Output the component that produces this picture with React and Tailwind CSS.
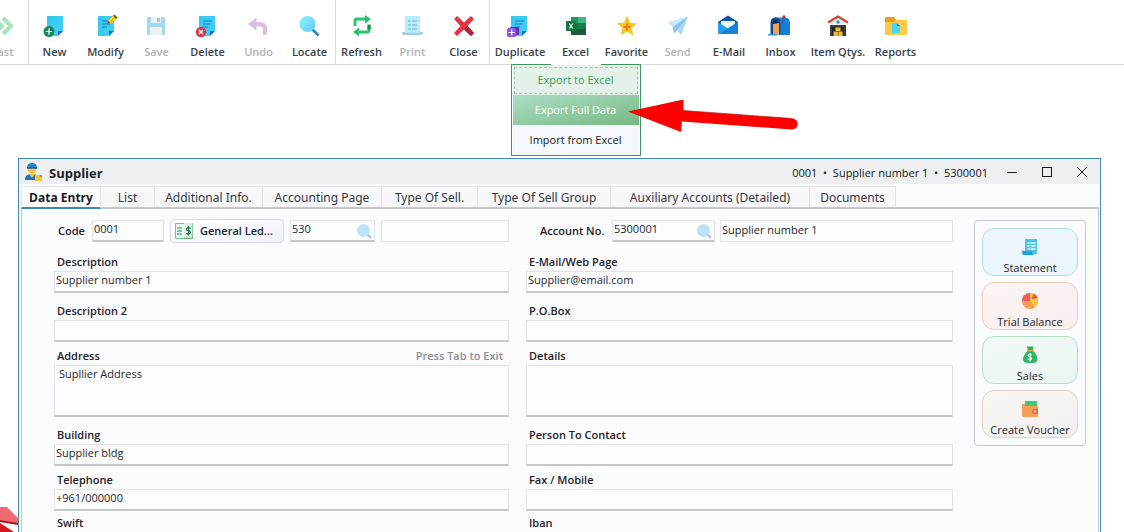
import React from "react";

function Icon({ children }) {
  return (
    <svg viewBox="0 0 24 24" className="size-6 shrink-0 overflow-visible" aria-hidden="true">
      {children}
    </svg>
  );
}

function Sheet({ x = 4, lines = true }) {
  return (
    <g>
      <path d={`M${x} 2h16v15l-5 5h-11z`} fill="url(#sheetFill)" />
      <path d={`M${x + 16} 17l-5 5v-5z`} fill="#1574cc" />
      {lines && (
        <path d={`M${x + 4} 7h9M${x + 4} 10h8M${x + 4} 13h5`} stroke="#1a80c6" strokeWidth="1" fill="none" />
      )}
    </g>
  );
}

const icons = {
  last: (
    <Icon>
      <path d="M3 4l8 8-8 8M12 4l8 8-8 8" fill="none" stroke="#a3e6bd" strokeWidth="4" />
    </Icon>
  ),
  fresh: (
    <Icon>
      <Sheet lines={false} />
      <circle cx="6" cy="17.5" r="5.5" fill="#128a57" />
      <path d="M6 14.3v6.4M2.8 17.5h6.4" stroke="#fff" strokeWidth="1.2" />
    </Icon>
  ),
  modify: (
    <Icon>
      <Sheet />
      <path d="M13 10l2-5 5-4 3 3-5 5z" fill="#f5be0b" />
      <path d="M19 1.700l1.500-1.200 3 3-1.300 1.500z" fill="#7c5a12" />
      <path d="M13 10l1-3 2 2z" fill="#5f4918" />
      <path d="M15.500 6.500l4-4" stroke="#fff0a0" strokeWidth="1" />
    </Icon>
  ),
  save: (
    <Icon>
      <path d="M2 4q0-1 1-1h16l1 1v16q0 1-1 1H3q-1 0-1-1z" fill="#a3d9ef" />
      <path d="M6 3h10v6H6zM5 13h12v8H5z" fill="#eef1f4" />
      <path d="M12 4h3v4h-3z" fill="#9cc8df" />
    </Icon>
  ),
  remove: (
    <Icon>
      <Sheet x={3} />
      <circle cx="5" cy="18" r="5.200" fill="#d63a4d" />
      <path d="M3 16l4 4M7 16l-4 4" stroke="#fff" strokeWidth="1.3" />
    </Icon>
  ),
  undo: (
    <Icon>
      <path d="M1 10l8.500-6.500V8H13q7 0 7 7v6h-4v-5q0-3.500-3.500-3.500h-3V17z" fill="#dac0e8" />
    </Icon>
  ),
  locate: (
    <Icon>
      <path d="M14 15l6.500 6.500" stroke="#2484cf" strokeWidth="2.600" />
      <circle cx="9.500" cy="10" r="8" fill="url(#lensFill)" />
    </Icon>
  ),
  refresh: (
    <Icon>
      <path d="M5 12V7q0-2 2-2h9M19 11v5q0 2-2 2H8" fill="none" stroke="#27c469" strokeWidth="3" />
      <path d="M15 1l6 4-6 4.500zM9 13.500v9L3 18z" fill="#27c469" />
      <path d="M17.500 10.500h3v5h-3z" fill="#149a4d" />
    </Icon>
  ),
  print: (
    <Icon>
      <path d="M4 2h15v18H4z" fill="#b5eefa" />
      <path d="M7 7h3M11 7h5M7 11h3M11 11h5M7 15h3M11 15h5" stroke="#7ba9d0" strokeWidth="1" />
      <path d="M1 18q0 3 2 3h17q2 0 2-3h-3v1H4v-1z" fill="#a9c9e8" />
    </Icon>
  ),
  close: (
    <Icon>
      <path d="M5 2l7 6.500L19 2l3 3-6.500 7 6.500 7-3 3-7-6.500L5 22l-3-3 6.500-7L2 5z" fill="#e23443" />
      <path d="M12 15.500L15.500 12l6.500 7-3 3z" fill="#b81f37" />
    </Icon>
  ),
  duplicate: (
    <Icon>
      <Sheet x={3} />
      <rect x="2" y="13" width="9" height="8" rx="1" fill="#5b2fae" />
      <rect x="-1" y="14" width="9.500" height="9" rx="2" fill="#9450e0" />
      <path d="M3.700 15.500v6M0.700 18.500h6" stroke="#fff" strokeWidth="1.200" />
    </Icon>
  ),
  excel: (
    <Icon>
      <path d="M7 3h15v18H7z" fill="#21734a" />
      <path d="M14 3h8v6h-8z" fill="#3ab881" />
      <path d="M7 3h7v6H7z" fill="#259461" />
      <path d="M14 9h8v6h-8z" fill="#1a7f4b" />
      <path d="M7 15h15v6H7z" fill="#1b5b38" />
      <rect x="2" y="7" width="10" height="10" rx="1" fill="#117a43" />
      <path d="M5.300 9.500l3.400 5M8.700 9.500l-3.400 5" stroke="#fff" strokeWidth="1.200" />
    </Icon>
  ),
  favorite: (
    <Icon>
      <path d="M12 1.800l2.900 7 7.300.4-5.600 4.900 1.800 7.400-6.400-3.900-6.400 3.900 1.800-7.400-5.600-4.900 7.300-.4z" fill="#fcc41d" />
      <path d="M12 9.500v7M8.500 13h7" stroke="#f0781a" strokeWidth="1.800" />
    </Icon>
  ),
  send: (
    <Icon>
      <path d="M2 8.500L22 2.500 15 21l-4-5-3 3.500-1-6.500z" fill="#a7d9f4" />
      <path d="M2 8.500L22 2.500 7 13z" fill="#c4e9fa" />
      <path d="M8 19.500L7 13l15-10.500L11 16z" fill="#86c4ea" />
    </Icon>
  ),
  email: (
    <Icon>
      <path d="M1 8l10-6.500L21 8v6H1z" fill="#11549f" />
      <path d="M4 7h14v8H4z" fill="#eef8ff" />
      <path d="M1 8l10 6.500L21 8v11q0 1-1 1H2q-1 0-1-1z" fill="#27a0e6" />
      <path d="M21 8v11q0 1-1 1H2z" fill="#1683d2" />
    </Icon>
  ),
  inbox: (
    <Icon>
      <path d="M6 3.500h10q5 0 5 6V21H7z" fill="#1280db" />
      <path d="M1.500 21V9q0-5.500 5-5.500t5 5.500v12z" fill="#164f91" />
      <path d="M3.500 20V9.500q0-4 3-4t3 4V20z" fill="#0b2f61" />
      <path d="M4 10l6-1v12H4z" fill="#eda15a" />
      <path d="M-1 20h9v1.500h-9z" fill="#2e9be2" />
      <path d="M13.500 10V1.500h3V4h-2v6z" fill="#c62a3f" />
    </Icon>
  ),
  items: (
    <Icon>
      <path d="M4 7l8-4.500L20 7v14.500H4z" fill="#eceef0" />
      <path d="M4 11h16v11H4z" fill="#3b3d43" />
      <path d="M2 8.500l10-6 10 6" fill="none" stroke="#d2452b" strokeWidth="2.200" />
      <circle cx="12" cy="8" r="1.800" fill="#2798e0" />
      <path d="M6 13h12v9H6z" fill="#25262a" />
      <path d="M9.500 13.500h5V17h-5zM7.500 17.500h4.300V22H7.500zM12.300 17.500h4.300V22h-4.300z" fill="#efbd2f" />
    </Icon>
  ),
  reports: (
    <Icon>
      <path d="M1 4q0-1 1-1h8l2 3h10q1 0 1 1v4H1z" fill="#e3a21a" />
      <path d="M1 8h9l2-2h10q1 0 1 1v13q0 1-1 1H2q-1 0-1-1z" fill="#fdcb48" />
      <path d="M8 9h5l3 3v7H8z" fill="#44d8f0" />
      <path d="M13 9l3 3h-3z" fill="#1785cf" />
    </Icon>
  ),
};

function Gradients() {
  return (
    <svg className="absolute size-0" aria-hidden="true">
      <defs>
        <linearGradient id="sheetFill" x1="0" y1="0" x2="1" y2="1">
          <stop offset="0" stopColor="#34c8f0" />
          <stop offset="1" stopColor="#43cff5" />
        </linearGradient>
        <linearGradient id="lensFill" x1="0" y1="0" x2="1" y2="1">
          <stop offset="0" stopColor="#8df3fd" />
          <stop offset="1" stopColor="#5fcaf5" />
        </linearGradient>
      </defs>
    </svg>
  );
}

function Tool({ icon, label, disabled, width = "w-[51px]" }) {
  return (
    <button
      type="button"
      disabled={disabled}
      className={`flex h-16 shrink-0 flex-col items-center gap-1.5 pt-3.5 text-[11px] leading-4 font-semibold whitespace-nowrap ${width} ${
        disabled ? "text-[#b0b3b8]" : "text-[#39424d]"
      }`}
    >
      {icons[icon]}
      <span>{label}</span>
    </button>
  );
}

function ExcelMenu() {
  return (
    <div className="absolute top-full left-1/2 z-20 w-[130px] -translate-x-1/2 border border-[#3f9360] bg-white text-[11px]">
      <div className="absolute -top-px left-1/2 h-px w-[50px] -translate-x-1/2 bg-white" />
      <div className="px-px">
        <button type="button" className="flex h-[30px] w-full items-center justify-center bg-[#e4f1e9] p-px text-[#369a58]">
          <span className="flex h-[27px] w-full items-center justify-center border border-dashed border-[#9fceaf]">Export to Excel</span>
        </button>
        <button type="button" className="block h-[30px] w-full bg-linear-to-br from-[#abdfc6] to-[#78b881] text-white">
          Export Full Data
        </button>
        <button type="button" className="block h-[30px] w-full bg-[#f5f8fd] text-[#17191c]">
          Import from Excel
        </button>
      </div>
      <svg viewBox="0 0 172 34" className="absolute top-[34px] left-[116px] h-[34px] w-[172px]" aria-hidden="true">
        <path d="M0 12.500L55.500 0.500v11L164.500 19.500a5.500 5.500 0 0 1-.5 11L54 22.500l-1 10.500z" fill="#fe0000" />
        <path d="M55.500 11.500L164.500 19.500" stroke="#a31212" strokeWidth="0.600" />
      </svg>
    </div>
  );
}

function Toolbar() {
  return (
    <div role="toolbar" className="flex h-[65px] border-b border-[#d9d9dc]">
      <div className="flex w-[29px] shrink-0 justify-end overflow-hidden border-r border-[#d9d9dc]">
        <Tool icon="last" label="Last" disabled />
      </div>
      <div className="flex shrink-0 border-r border-[#d9d9dc]">
        <Tool icon="fresh" label="New" />
        <Tool icon="modify" label="Modify" />
        <Tool icon="save" label="Save" disabled />
        <Tool icon="remove" label="Delete" />
        <Tool icon="undo" label="Undo" disabled />
        <Tool icon="locate" label="Locate" />
      </div>
      <div className="flex shrink-0 border-r border-[#d9d9dc]">
        <Tool icon="refresh" label="Refresh" />
        <Tool icon="print" label="Print" disabled />
        <Tool icon="close" label="Close" />
      </div>
      <div className="flex shrink-0">
        <Tool icon="duplicate" label="Duplicate" width="w-[60px]" />
        <div className="relative shrink-0">
          <Tool icon="excel" label="Excel" />
          <ExcelMenu />
        </div>
        <Tool icon="favorite" label="Favorite" />
        <Tool icon="send" label="Send" disabled />
        <Tool icon="email" label="E-Mail" width="w-[52px]" />
        <Tool icon="inbox" label="Inbox" />
        <Tool icon="items" label="Item Qtys." width="w-16" />
        <Tool icon="reports" label="Reports" />
      </div>
    </div>
  );
}

function TitleBar() {
  return (
    <div className="flex h-[25px] items-center bg-[#eeeff1] pr-px">
      <svg viewBox="0 0 18 18" className="mr-1.5 ml-1.5 size-[18px]" aria-hidden="true">
        <path d="M0 17q0-6 6-6h2q6 0 6 6z" fill="#1b74bd" />
        <path d="M4 11h6l-3 4z" fill="#f6c343" />
        <circle cx="7" cy="6.500" r="4.300" fill="#fbc73f" />
        <path d="M2 5q0-5 5-5t5 5z" fill="#1f83cf" />
        <path d="M2 4.500h10v1.200H2z" fill="#0f5394" />
        <path d="M10 12h7v6h-7z" fill="#f8c53a" />
        <path d="M14.500 12h2.500v2h-2.500z" fill="#d99413" />
      </svg>
      <h1 className="pt-0.5 text-[13px] leading-5 font-bold text-[#1c1f24]">Supplier</h1>
      <div className="ml-auto pt-0.5 pr-1.5 text-[11px] leading-5 whitespace-pre text-[#17191c]">0001  •  Supplier number 1  •  5300001</div>
      <div className="flex text-[#17191c]">
        <button type="button" aria-label="Minimize" className="flex h-[25px] w-[35px] items-center justify-center">
          <svg viewBox="0 0 12 12" className="size-3" shapeRendering="crispEdges"><path d="M1 6.500h10" stroke="currentColor" /></svg>
        </button>
        <button type="button" aria-label="Maximize" className="flex h-[25px] w-[35px] items-center justify-center">
          <svg viewBox="0 0 12 12" className="size-3" shapeRendering="crispEdges"><path d="M1.500 1.500h9v9h-9z" fill="none" stroke="currentColor" /></svg>
        </button>
        <button type="button" aria-label="Close window" className="flex h-[25px] w-[35px] items-center justify-center">
          <svg viewBox="0 0 12 12" className="size-3"><path d="M1 1l10 10M11 1L1 11" stroke="currentColor" /></svg>
        </button>
      </div>
    </div>
  );
}

const tabs = [
  ["List", "w-[54px]"],
  ["Additional Info.", "w-[108px]"],
  ["Accounting Page", "w-[119px]"],
  ["Type Of Sell.", "w-24"],
  ["Type Of Sell Group", "w-[133px]"],
  ["Auxiliary Accounts (Detailed)", "w-[199px]"],
  ["Documents", "w-[86px]"],
];

function Tabs() {
  return (
    <div role="tablist" className="mt-0.5 flex border-b-2 border-[#c6c6cd]">
      <button
        type="button"
        role="tab"
        aria-selected="true"
        className="-mb-0.5 h-[23px] w-20 shrink-0 border-t border-r border-b-2 border-l border-x-[#e2e2e8] border-t-[#e2e2e8] border-b-[#4089b4] bg-white pt-0.5 text-[12px] leading-[18px] font-bold whitespace-nowrap text-[#17191c]"
      >
        Data Entry
      </button>
      {tabs.map(([name, width]) => (
        <button
          key={name}
          type="button"
          role="tab"
          aria-selected="false"
          className={`h-[21px] shrink-0 border-t border-r border-[#e2e2e8] bg-[#f7f7fa] pt-0.5 font-['Noto_Sans',sans-serif] text-[12px] leading-[18px] whitespace-nowrap text-[#33373d] ${width}`}
        >
          {name}
        </button>
      ))}
    </div>
  );
}

const boxBase = "block w-full min-w-0 border border-[#e2e3e9] bg-[#fdfdfe] text-[11px] text-[#24272c] outline-none";
const labelText = "text-[11px] font-semibold text-[#1f2228]";

function Field({ id, label, value = "", hint, area }) {
  return (
    <div>
      <div className="flex h-[18px] items-center justify-between pr-1.5 pl-[3px] text-[11px] leading-[18px] font-semibold">
        <label htmlFor={id} className={labelText}>{label}</label>
        {hint && <span className="text-[#8b8e93]">{hint}</span>}
      </div>
      {area ? (
        <textarea id={id} defaultValue={value} className={`${boxBase} h-[52px] resize-none border-b-2 border-b-[#c6c6cd] px-1 leading-4`} />
      ) : (
        <input id={id} defaultValue={value} className={`${boxBase} h-[22px] border-b-2 border-b-[#c6c6cd] px-px pb-1`} />
      )}
    </div>
  );
}

function Pair({ gap, children }) {
  return <div className={`grid grid-cols-[455fr_427fr] gap-x-[17px] ${gap}`}>{children}</div>;
}

function LookupInput({ label, value, width }) {
  return (
    <div className={`flex h-[22px] shrink-0 items-center border border-b-2 border-[#e2e3e9] border-b-[#c6c6cd] bg-[#fdfdfe] ${width}`}>
      <input id={label} aria-label={label} defaultValue={value} className="h-full w-full min-w-0 px-px pb-1 text-[11px] text-[#24272c] outline-none" />
      <button type="button" aria-label="Search" className="mr-0.5 shrink-0">
        <svg viewBox="0 0 16 16" className="size-4" aria-hidden="true">
          <path d="M10.500 10.500l4.500 4.500" stroke="#9fbfe8" strokeWidth="2" />
          <circle cx="7.500" cy="7.500" r="6.500" fill="#bce3f8" />
        </svg>
      </button>
    </div>
  );
}

function Form() {
  return (
    <form className="min-w-0 flex-1">
      <Pair gap="h-6 items-center">
        <div className="flex items-center">
          <label htmlFor="code" className={`w-[38px] shrink-0 pl-1 ${labelText}`}>Code</label>
          <input id="code" defaultValue="0001" className="h-[22px] w-[72px] shrink-0 border border-b-2 border-[#e2e3e9] border-b-[#c6c6cd] bg-[#fdfdfe] px-px pb-1 text-[11px] text-[#24272c] outline-none" />
          <button type="button" className="mx-1.5 flex h-6 w-[114px] shrink-0 items-center gap-[7px] rounded border border-[#d9dae3] bg-linear-to-br from-white to-[#eef2fb] pl-1 text-[11px] font-semibold whitespace-nowrap text-[#24272c]">
            <svg viewBox="0 0 18 16" className="h-4 w-[18px]" aria-hidden="true">
              <path d="M0.500 0.500h9v15h-9z" fill="#f3fbf6" stroke="#6cc394" />
              <path d="M2 5h5M2 8h5M2 11h5" stroke="#4dbd81" strokeWidth="1.500" />
              <path d="M9 0h9v15.500H9z" fill="#dcefe4" />
              <path d="M9 15.300h9V0" fill="none" stroke="#4d9e74" />
              <path d="M15.700 5.500q-2-1.300-3.500-.5t0 2.300l2.500.8q1.500 1.600 0 2.500t-3.400-.4M13.500 3v9.500" fill="none" stroke="#1b7348" strokeWidth="1.200" />
            </svg>
            General Led...
          </button>
          <LookupInput label="General ledger" value="530" width="w-[85px]" />
          <input aria-label="Ledger name" className={`${boxBase} ml-1.5 h-[22px] px-px`} />
        </div>
        <div className="flex items-center">
          <span className={`w-[86px] shrink-0 pl-3.5 whitespace-nowrap ${labelText}`}>
            <label htmlFor="Account">Account No.</label>
          </span>
          <LookupInput label="Account" value="5300001" width="w-[103px]" />
          <input aria-label="Account name" defaultValue="Supplier number 1" className={`${boxBase} ml-[5px] h-[22px] px-px pb-1`} />
        </div>
      </Pair>
      <Pair gap="mt-2.5">
        <Field id="description" label="Description" value="Supplier number 1" />
        <Field id="email" label="E-Mail/Web Page" value="Supplier@email.com" />
      </Pair>
      <Pair gap="mt-[9px]">
        <Field id="description2" label="Description 2" />
        <Field id="pobox" label="P.O.Box" />
      </Pair>
      <Pair gap="mt-[5px]">
        <Field id="address" label="Address" value="Supllier Address" hint="Press Tab to Exit" area />
        <Field id="details" label="Details" area />
      </Pair>
      <Pair gap="mt-[9px]">
        <Field id="building" label="Building" value="Supplier bldg" />
        <Field id="contact" label="Person To Contact" />
      </Pair>
      <Pair gap="mt-[5px]">
        <Field id="telephone" label="Telephone" value="+961/000000" />
        <Field id="fax" label="Fax / Mobile" />
      </Pair>
      <Pair gap="mt-[3px]">
        <Field id="swift" label="Swift" />
        <Field id="iban" label="Iban" />
      </Pair>
    </form>
  );
}

function Card({ label, tone, children }) {
  return (
    <button type="button" className={`flex h-12 w-24 flex-col items-center justify-between rounded-xl border bg-linear-to-br pt-[9px] text-[11px] leading-[14px] text-[#24272c] ${tone}`}>
      <svg viewBox="0 0 18 18" className="size-[18px] shrink-0" aria-hidden="true">{children}</svg>
      {label}
    </button>
  );
}

function Sidebar() {
  return (
    <aside className="mt-px flex shrink-0 flex-col gap-1.5 self-start rounded border border-[#c6c7d0] p-[7px]">
      <Card label="Statement" tone="border-[#b2dde6] from-[#eef6fd] to-[#e9f6fb]">
        <path d="M4 1h12v14q0 1-1 1H4z" fill="#4cc3e8" />
        <path d="M6.500 5h2M9.500 5h5M6.500 8h2M9.500 8h5M6.500 11h2M9.500 11h5" stroke="#e8fbff" strokeWidth="1.400" />
        <path d="M1 13h10q0 4 3 4H3q-2 0-2-4z" fill="#1ba4dc" />
      </Card>
      <Card label="Trial Balance" tone="border-[#efcdb9] from-[#fbf6f3] to-[#f9edee]">
        <circle cx="9" cy="9" r="8" fill="#fb9c56" />
        <path d="M9 9H1a8 8 0 0 1 8-8z" fill="#f75b5e" />
        <path d="M9 9h8a8 8 0 0 1-3.500 6.600z" fill="#fbc740" />
        <path d="M9 9V1a8 8 0 0 1 8 8z" fill="#fbc740" />
        <path d="M10.500 7l2-5.500q3.500 1.500 4.500 4.500z" fill="#f4504f" />
      </Card>
      <Card label="Sales" tone="border-[#b4dfc6] from-[#f3f9fa] to-[#eaf6ef]">
        <path d="M6 0.500h6.500L11.500 5H7z" fill="#27b160" />
        <path d="M7 4.500h5q4.500 5 4.500 8.500t-4 4h-6q-4.500-.5-4.500-4T7 4.500z" fill="#2fb565" />
        <path d="M6 4.500h6.500" stroke="#f0a43c" strokeWidth="1.400" />
        <path d="M11 9q-2-1.300-3.200-.4t0 2l2.200.7q1.200 1.200 0 2.100t-3.200-.4M9.200 7v8.500" fill="none" stroke="#e4fbec" strokeWidth="1.200" />
      </Card>
      <Card label="Create Voucher" tone="border-[#ded6c2] from-[#f7f7f5] to-[#f1f0ee]">
        <path d="M4 1h12v6H4z" fill="#3cc77d" />
        <path d="M1 4h3v2h12q1 0 1 1v9q0 1-1 1H3q-2 0-2-2z" fill="#fa9d57" />
        <path d="M12 9h5v5h-5q-1.500-2.500 0-5z" fill="#de6a3d" />
        <circle cx="14" cy="11.500" r="1.200" fill="#ffd6ae" />
      </Card>
    </aside>
  );
}

export default function App() {
  return (
    <div className="relative flex h-screen flex-col overflow-hidden bg-white font-['Open_Sans','Noto_Sans',sans-serif]">
      <Gradients />
      <Toolbar />
      <svg viewBox="0 0 18 26" className="absolute bottom-0 left-0 h-[26px] w-[18px]" aria-hidden="true">
        <path d="M0 1h7l11 11v6L0 15z" fill="#f16a72" />
        <path d="M0 14l18 3v2L0 16z" fill="#b3101c" />
        <path d="M0 17l14 9H0z" fill="#dc1422" />
      </svg>
      <main className="mt-[93px] mr-[23px] ml-[18px] min-h-0 flex-1 overflow-hidden border-x border-t border-[#4389b8] bg-[#fbfcff]">
        <TitleBar />
        <div className="pr-px pl-0.5">
          <Tabs />
          <div className="flex gap-[21px] border-x border-[#c6c6cd] pt-2.5 pr-3 pb-4 pl-8">
            <Form />
            <Sidebar />
          </div>
        </div>
      </main>
    </div>
  );
}
